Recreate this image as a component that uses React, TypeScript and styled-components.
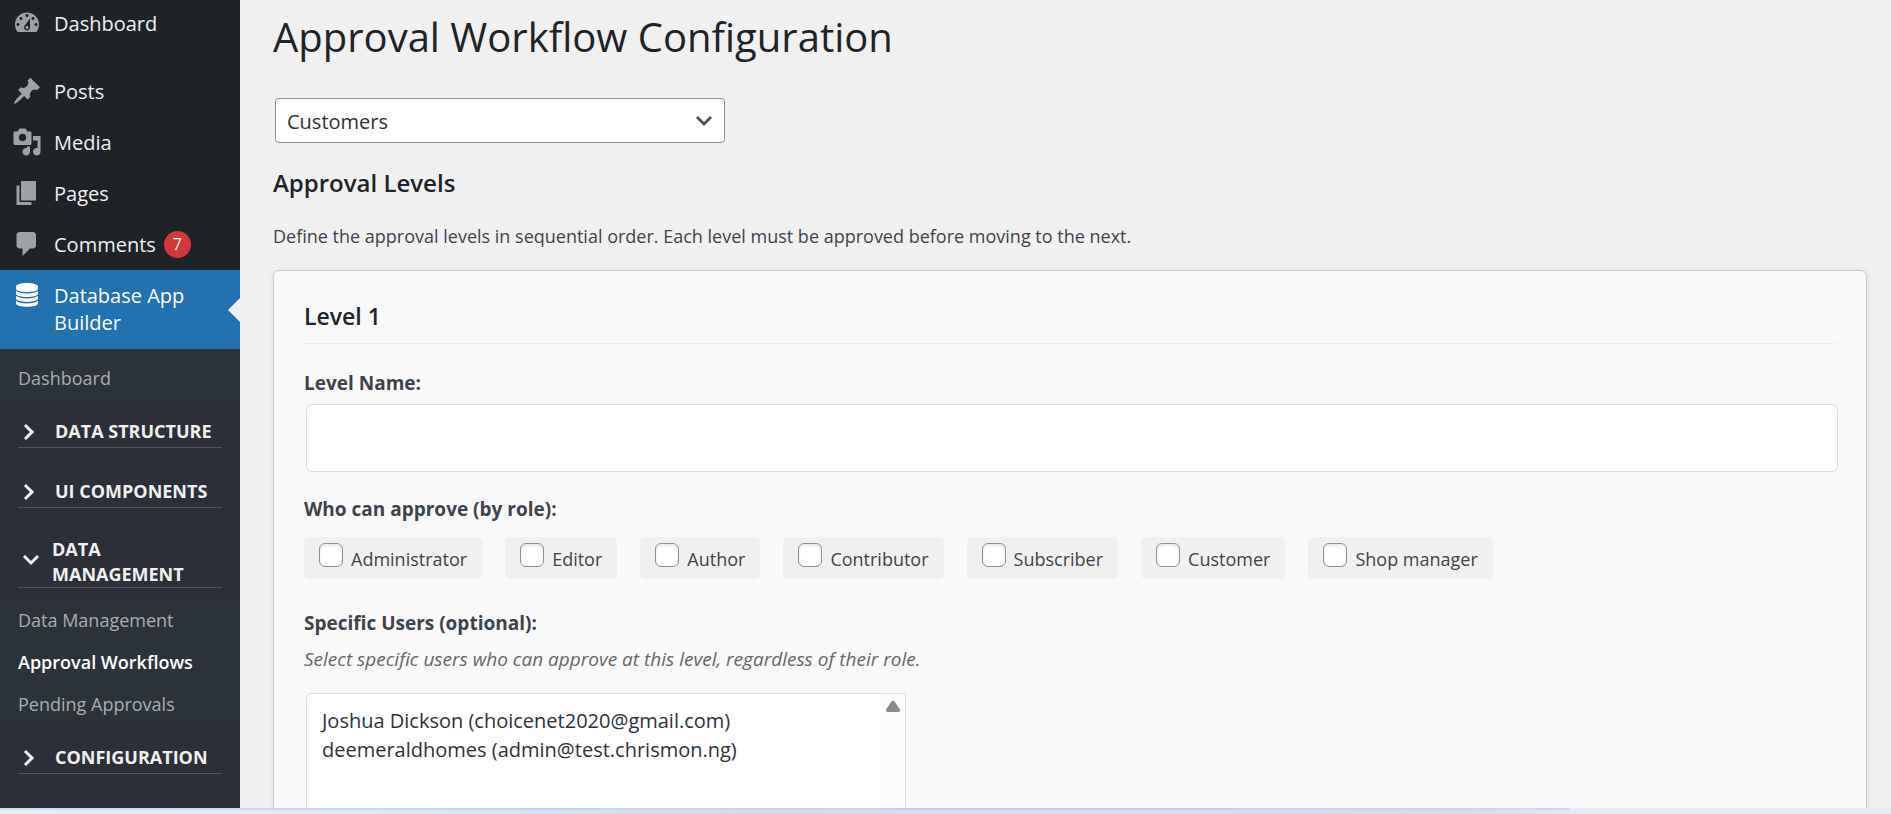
import React, { useState } from "react";
import styled, { createGlobalStyle } from "styled-components";

const GlobalStyle = createGlobalStyle`
  *, *::before, *::after { box-sizing: border-box; }
  body {
    margin: 0;
    background: #f0f0f0;
    color: #3c434a;
    font-family: "Segoe UI", "Open Sans", "Noto Sans", sans-serif;
    font-size: 18px;
    line-height: 27px;
  }
  button, input, select { font: inherit; color: inherit; }
`;

const Shell = styled.div`
  display: flex;
  flex-direction: column;
  height: 100vh;
  overflow: hidden;
`;

const Workspace = styled.div`
  display: flex;
  flex: 1;
  min-height: 0;
  overflow: hidden;
`;

const Sidebar = styled.nav`
  flex: 0 0 240px;
  background: #1d2327;
  overflow: hidden;
`;

const Menu = styled.ul`
  list-style: none;
  margin: -2px 0 0;
  padding: 0;
`;

const MenuSeparator = styled.li`
  height: 17px;
`;

const MenuLink = styled.a<{ $current?: boolean }>`
  position: relative;
  display: flex;
  align-items: flex-start;
  gap: 12px;
  padding: 12px 32px ${(p) => (p.$current ? 13 : 12)}px 12px;
  background: ${(p) => (p.$current ? "#2271b1" : "transparent")};
  color: ${(p) => (p.$current ? "#fff" : "#f0f0f1")};
  text-decoration: none;
  font-size: 20px;
  line-height: 27px;

  svg {
    flex: none;
    width: 30px;
    height: 30px;
    margin: -2px 0 -1px;
    fill: ${(p) => (p.$current ? "#fff" : "#9ca2a7")};
  }
`;

const Notch = styled.span`
  position: absolute;
  top: 50%;
  right: 0;
  margin-top: -12px;
  border: 12px solid transparent;
  border-left-width: 0;
  border-right-color: #f0f0f0;
`;

const Badge = styled.span`
  width: 27px;
  height: 27px;
  margin-left: -4px;
  border-radius: 50%;
  background: #d63638;
  color: #fff;
  font-size: 16px;
  text-align: center;
`;

const Submenu = styled.div`
  background: #2c3338;
  padding-top: 9px;
`;

const SubmenuLink = styled.a<{ $current?: boolean }>`
  display: block;
  padding: 7px 18px 8px;
  color: ${(p) => (p.$current ? "#fff" : "#a9adb0")};
  font-weight: ${(p) => (p.$current ? 600 : 400)};
  text-decoration: none;
`;

const Group = styled.div`
  padding: 12px 18px;
  background: #2c2f37;
`;

const GroupToggle = styled.button<{ $open?: boolean }>`
  display: flex;
  align-items: center;
  gap: ${(p) => (p.$open ? 12 : 15)}px;
  width: 100%;
  padding: ${(p) => (p.$open ? "5px 0 0 4px" : "7px 0 3px 4px")};
  border: 0;
  border-bottom: 1px solid #50545a;
  background: none;
  color: #f0f0f1;
  font-size: 18px;
  font-weight: 700;
  line-height: 25px;
  text-align: left;
  text-transform: uppercase;

  svg {
    flex: none;
    width: 18px;
    height: 18px;
    margin-bottom: ${(p) => (p.$open ? 6 : 0)}px;
    fill: none;
    stroke: currentColor;
    stroke-width: 3;
  }
`;

const Main = styled.main`
  flex: 1;
  min-width: 0;
  padding: 11px 24px 0 33px;
`;

const PageTitle = styled.h1`
  margin: 0;
  color: #1d2327;
  font-size: 40px;
  font-weight: 400;
  line-height: 52px;
`;

const SelectFrame = styled.div`
  position: relative;
  width: 450px;
  margin: 35px 2px 0;

  svg {
    position: absolute;
    top: 15px;
    right: 12px;
    width: 18px;
    height: 16px;
    fill: none;
    stroke: #50555b;
    stroke-width: 3;
    pointer-events: none;
  }
`;

const TableSelect = styled.select`
  appearance: none;
  display: block;
  width: 100%;
  height: 45px;
  padding: 2px 36px 0 11px;
  border: 1px solid #8c8f94;
  border-radius: 4px;
  background: #fff;
  color: #2c3338;
  font-size: 20px;
`;

const SectionTitle = styled.h2`
  margin: 26px 0 0;
  color: #1d2327;
  font-size: 24px;
  font-weight: 600;
  line-height: 27px;
`;

const Intro = styled.p`
  margin: 27px 0 0;
`;

const LevelCard = styled.section`
  margin-top: 20px;
  padding: 31px 30px 30px;
  border: 1px solid #ccc;
  border-radius: 6px;
  background: #f9f9f9;
  box-shadow: 0 2px 6px rgba(0, 0, 0, 0.08);
`;

const LevelTitle = styled.h3`
  margin: 0;
  padding-bottom: 13px;
  border-bottom: 1px solid #eee;
  color: #1d2327;
  font-size: 23px;
  font-weight: 600;
  line-height: 28px;
`;

const Field = styled.div`
  margin-top: 26px;
`;

const FieldLabel = styled.label`
  display: block;
  font-size: 19px;
  font-weight: 700;
`;

const RoleFields = styled.fieldset`
  margin: 24px 0 0;
  padding: 0;
  border: 0;
`;

const RoleLegend = styled.legend`
  padding: 0;
  font-size: 19px;
  font-weight: 700;
`;

const TextInput = styled.input`
  display: block;
  width: 100%;
  height: 68px;
  margin: 7px -2px 0 2px;
  padding: 0 15px;
  border: 1px solid #ddd;
  border-radius: 6px;
  background: #fff;
`;

const Roles = styled.div`
  display: flex;
  flex-wrap: wrap;
  gap: 23px;
  margin: 14px 0 31px;
`;

const Role = styled.label`
  display: flex;
  align-items: flex-start;
  gap: 8px;
  padding: 6px 15px 4px;
  border-radius: 5px;
  background: #f0f0f0;
  line-height: 32px;
`;

const Checkbox = styled.input`
  appearance: none;
  width: 24px;
  height: 24px;
  margin: 0;
  border: 1px solid #8c8f94;
  border-radius: 6px;
  background: #fff;
  box-shadow: inset 0 2px 3px rgba(0, 0, 0, 0.1);

  &:checked { background: #2271b1; }
`;

const Hint = styled.p`
  margin: 9px 0 0;
  color: #666;
  font-size: 19px;
  font-style: italic;
`;

const UserFrame = styled.div`
  display: flex;
  width: 600px;
  height: 180px;
  margin: 20px 2px 0;
  border: 1px solid #ddd;
  border-radius: 6px 0 0 6px;
  background: #fff;
`;

const UserSelect = styled.select`
  flex: 1;
  min-width: 0;
  padding: 13px 12px;
  border: 0;
  outline: 0;
  background: transparent;
  color: #2c3338;
  font-size: 20px;
  overflow: hidden;

  option {
    min-height: 29px;
    padding: 0 3px;
    line-height: 29px;
  }
`;

const ScrollTrack = styled.div`
  flex: 0 0 24px;
  padding: 6px 4px;
  background: #fcfcfc;

  svg {
    display: block;
    width: 16px;
    height: 12px;
    fill: #8b8b8b;
  }
`;

const BottomStrip = styled.div`
  flex: 0 0 6px;
  border-top: 2px solid #c6d2e6;
  background: linear-gradient(90deg, #e4eef8 0%, #dfebf8 18%, #d3e3fb 28%, #d5daf0 40%, #d3e0f8 55%, #d3dcf4 70%, #d9dcf0 78%, #e2edf8 84%, #e2edf8 100%);
  border-image: linear-gradient(90deg, #d0deea 0%, #c6d4ea 25%, #c6cce2 60%, #d0dae6 83%, #e2edf8 83%) 2 0 0 0;
`;

const icons = {
  dashboard:
    "M3.76 16h12.48c1.1-1.37 1.76-3.11 1.76-5 0-4.42-3.58-8-8-8s-8 3.58-8 8c0 1.89.66 3.63 1.76 5zM10 4c.55 0 1 .45 1 1s-.45 1-1 1-1-.45-1-1 .45-1 1-1zM6 6c.55 0 1 .45 1 1s-.45 1-1 1-1-.45-1-1 .45-1 1-1zm8 0c.55 0 1 .45 1 1s-.45 1-1 1-1-.45-1-1 .45-1 1-1zm-5.37 5.55L12 7v6c0 1.1-.9 2-2 2s-2-.9-2-2c0-.57.24-1.08.63-1.45zM4 10c.55 0 1 .45 1 1s-.45 1-1 1-1-.45-1-1 .45-1 1-1zm12 0c.55 0 1 .45 1 1s-.45 1-1 1-1-.45-1-1 .45-1 1-1zm-5 3c0-.55-.45-1-1-1s-1 .45-1 1 .45 1 1 1 1-.45 1-1z",
  posts:
    "M10.44 3.02l1.82-1.82 6.36 6.35-1.83 1.82c-1.05-.68-2.48-.57-3.41.36l-.75.75c-.92.93-1.04 2.35-.35 3.41l-1.83 1.82-2.41-2.41-2.8 2.79c-.42.42-3.38 2.71-3.8 2.29s1.86-3.39 2.28-3.81l2.79-2.79L4.1 9.36l1.83-1.82c1.05.69 2.48.57 3.4-.36l.75-.75c.93-.92 1.05-2.35.36-3.41z",
  media:
    "M13 11V4c0-.55-.45-1-1-1h-1.67L9 1H5L3.67 3H2c-.55 0-1 .45-1 1v7c0 .55.45 1 1 1h10c.55 0 1-.45 1-1zM7 4.5c1.38 0 2.5 1.12 2.5 2.5S8.38 9.5 7 9.5 4.5 8.38 4.5 7 5.62 4.5 7 4.5zM14 6h5v10.5c0 1.38-1.12 2.5-2.5 2.5S14 17.88 14 16.5s1.12-2.5 2.5-2.5c.17 0 .34.02.5.05V9h-3V6zm-4 8.05V13h2v3.5c0 1.38-1.12 2.5-2.5 2.5S7 17.88 7 16.5 8.12 14 9.5 14c.17 0 .34.02.5.05z",
  pages: "M6 15V2h10v13H6zm-1 1h8v2H3V5h2v11z",
  comments:
    "M5 2h9c1.1 0 2 .9 2 2v7c0 1.1-.9 2-2 2h-2l-5 5v-5H5c-1.1 0-2-.9-2-2V4c0-1.1.9-2 2-2z",
  database:
    "M10 2c4 0 7.3.9 7.3 2.2v1.6C17.3 7.100 14 8 10 8S2.700 7.100 2.700 5.800V4.200C2.700 2.900 6 2 10 2zM2.700 7.200C4 8.400 6.800 9 10 9s6-.6 7.300-1.800v1.900c0 1.300-3.300 2.200-7.300 2.200s-7.300-.9-7.300-2.200zM2.700 10.500c1.300 1.200 4.100 1.800 7.300 1.800s6-.6 7.300-1.800v1.900c0 1.300-3.300 2.200-7.300 2.200s-7.300-.9-7.300-2.200zM2.700 13.800c1.300 1.200 4.100 1.800 7.300 1.800s6-.6 7.300-1.800v1.900c0 1.300-3.300 2.200-7.300 2.200s-7.300-.9-7.300-2.200z",
};

function Icon({ name }: { name: keyof typeof icons }) {
  return (
    <svg viewBox="0 0 20 20" aria-hidden="true">
      <path d={icons[name]} fillRule={name === "dashboard" ? "evenodd" : undefined} />
    </svg>
  );
}

const contentLinks: { label: string; icon: keyof typeof icons; count?: number }[] = [
  { label: "Posts", icon: "posts" },
  { label: "Media", icon: "media" },
  { label: "Pages", icon: "pages" },
  { label: "Comments", icon: "comments", count: 7 },
];

const roles = ["Administrator", "Editor", "Author", "Contributor", "Subscriber", "Customer", "Shop manager"];

function MenuGroup({ title, open }: { title: string; open?: boolean }) {
  return (
    <Group>
      <GroupToggle type="button" $open={open} aria-expanded={!!open}>
        <svg viewBox="0 0 18 18" aria-hidden="true">
          <path d={open ? "M2 6l7 7 7-7" : "M3 2l7 7-7 7"} />
        </svg>
        <span>{title}</span>
      </GroupToggle>
    </Group>
  );
}

export default function App() {
  const [levelName, setLevelName] = useState("");

  return (
    <>
      <GlobalStyle />
      <Shell>
        <Workspace>
          <Sidebar aria-label="Main menu">
            <Menu>
              <li>
                <MenuLink href="#dashboard">
                  <Icon name="dashboard" />
                  <span>Dashboard</span>
                </MenuLink>
              </li>
              <MenuSeparator role="separator" />
              {contentLinks.map((item) => (
                <li key={item.label}>
                  <MenuLink href={`#${item.icon}`}>
                    <Icon name={item.icon} />
                    <span>{item.label}</span>
                    {item.count && <Badge>{item.count}</Badge>}
                  </MenuLink>
                </li>
              ))}
              <li>
                <MenuLink href="#database" $current>
                  <Icon name="database" />
                  <span>Database App Builder</span>
                  <Notch />
                </MenuLink>
                <Submenu>
                  <SubmenuLink href="#app-dashboard">Dashboard</SubmenuLink>
                  <MenuGroup title="Data Structure" />
                  <MenuGroup title="UI Components" />
                  <MenuGroup title="Data Management" open />
                  <SubmenuLink href="#data">Data Management</SubmenuLink>
                  <SubmenuLink href="#workflows" $current aria-current="page">
                    Approval Workflows
                  </SubmenuLink>
                  <SubmenuLink href="#pending">Pending Approvals</SubmenuLink>
                  <MenuGroup title="Configuration" />
                  <Group />
                </Submenu>
              </li>
            </Menu>
          </Sidebar>

          <Main>
            <PageTitle>Approval Workflow Configuration</PageTitle>
            <SelectFrame>
              <TableSelect aria-label="Table" defaultValue="customers">
                <option value="customers">Customers</option>
              </TableSelect>
              <svg viewBox="0 0 18 16" aria-hidden="true">
                <path d="M2 4l7 7 7-7" />
              </svg>
            </SelectFrame>
            <SectionTitle>Approval Levels</SectionTitle>
            <Intro>
              Define the approval levels in sequential order. Each level must be approved before moving to the next.
            </Intro>

            <LevelCard>
              <LevelTitle>Level 1</LevelTitle>
              <Field>
                <FieldLabel htmlFor="level-name">Level Name:</FieldLabel>
                <TextInput
                  id="level-name"
                  type="text"
                  value={levelName}
                  onChange={(e) => setLevelName(e.target.value)}
                />
              </Field>
              <RoleFields>
                <RoleLegend>Who can approve (by role):</RoleLegend>
                <Roles>
                  {roles.map((role) => (
                    <Role key={role}>
                      <Checkbox type="checkbox" name="roles" value={role} />
                      <span>{role}</span>
                    </Role>
                  ))}
                </Roles>
              </RoleFields>
              <FieldLabel htmlFor="level-users">Specific Users (optional):</FieldLabel>
              <Hint>Select specific users who can approve at this level, regardless of their role.</Hint>
              <UserFrame>
                <UserSelect id="level-users" multiple size={5}>
                  <option>Joshua Dickson (choicenet2020@gmail.com)</option>
                  <option>deemeraldhomes (admin@test.chrismon.ng)</option>
                </UserSelect>
                <ScrollTrack aria-hidden="true">
                  <svg viewBox="0 0 16 12">
                    <path d="M6.500 1.500Q8 0 9.500 1.500L15 9.500Q15.500 12 13.500 12H2.500Q.500 12 1 9.500z" />
                  </svg>
                </ScrollTrack>
              </UserFrame>
            </LevelCard>
          </Main>
        </Workspace>
        <BottomStrip />
      </Shell>
    </>
  );
}
